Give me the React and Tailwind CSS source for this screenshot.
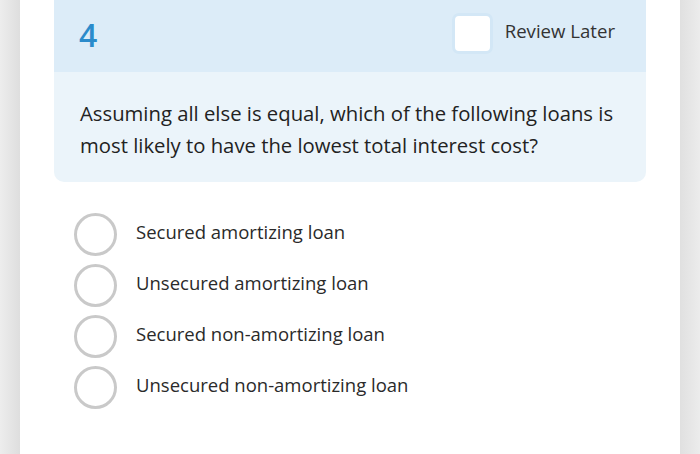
import React from "react";

const options = [
  "Secured amortizing loan",
  "Unsecured amortizing loan",
  "Secured non-amortizing loan",
  "Unsecured non-amortizing loan",
];

export default function App() {
  return (
    <div className="flex h-[454px] w-[700px] overflow-hidden font-['Open_Sans',sans-serif]">
      <div className="w-[20px] bg-gradient-to-r from-[#ededed] to-[#dedede]" />
      <div className="flex-1 bg-white px-[34px]">
        <div className="overflow-hidden rounded-b-[10px] bg-[#ebf4fa]">
          <div className="flex h-[72px] items-center justify-between bg-[#dcecf8] pl-[25px] pr-[31px]">
            <span className="mb-[2px] text-[32px] font-semibold leading-none text-[#2b8bcb]">4</span>
            <div className="flex items-center gap-[12px]">
              <div className="mb-[6px] h-[41px] w-[41px] rounded-[7px] border-[3px] border-[#d3e7f6] bg-white" />
              <span className="mb-[10px] text-[18.6px] text-[#333]">Review Later</span>
            </div>
          </div>
          <p className="px-[26px] pb-[21px] pt-[25px] text-[20.3px] leading-[32px] text-[#222]">
            Assuming all else is equal, which of the following loans is most likely to have the lowest total interest cost?
          </p>
        </div>
        <div className="mt-[31px] flex flex-col gap-[8px] pl-[20px]">
          {options.map((o) => (
            <label key={o} className="flex items-center gap-[19px]">
              <span className="h-[43px] w-[43px] shrink-0 rounded-full border-[3px] border-[#c9c9c9]" />
              <span className="mb-[5px] text-[18.5px] text-[#2a2a2a]">{o}</span>
            </label>
          ))}
        </div>
      </div>
      <div className="w-[20px] bg-gradient-to-r from-[#e0e0e0] to-[#ececec]" />
    </div>
  );
}
